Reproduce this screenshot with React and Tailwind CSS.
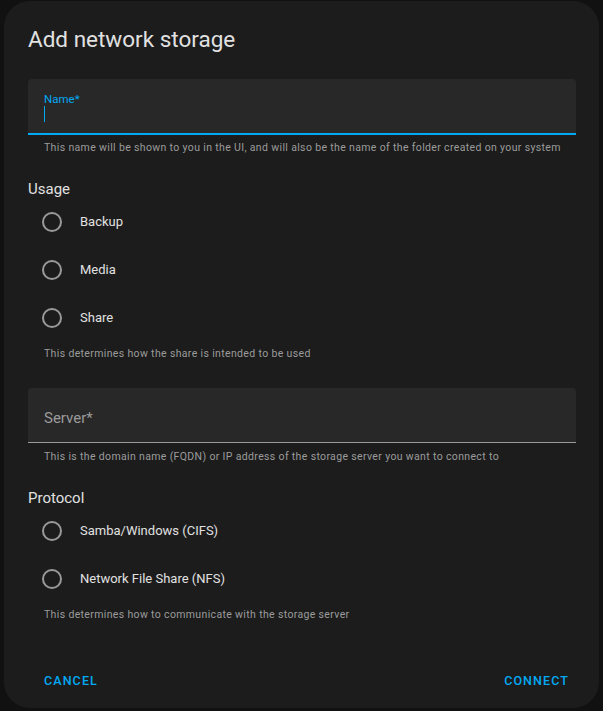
const usageOptions = ['Backup', 'Media', 'Share']
const protocolOptions = ['Samba/Windows (CIFS)', 'Network File Share (NFS)']

function Radio({ label }) {
  return (
    <label className="flex h-12 items-center">
      <span className="flex w-12 items-center justify-center">
        <span className="block h-5 w-5 rounded-full border-2 border-[#9a9a9a]" />
      </span>
      <span className="pl-1 text-[13px] text-[#e1e1e1]">{label}</span>
    </label>
  )
}

function Helper({ children }) {
  return (
    <p className="whitespace-nowrap px-4 text-[10.5px] leading-[16px] tracking-[0.35px] text-[#9b9b9b]">{children}</p>
  )
}

export default function App() {
  return (
    <div className="h-[711px] w-[603px] overflow-hidden bg-[#111111] pl-1 pt-px" style={{ fontFamily: 'Roboto, "Noto Sans", sans-serif' }}>
      <div className="flex h-[707px] w-[595px] flex-col rounded-[26px] bg-[#1c1c1c]">
        <h2 className="px-6 pt-[24px] text-[22.5px] leading-[28px] text-[#e1e1e1]">Add network storage</h2>

        <div className="flex-1 pl-6 pr-[23px] pt-[26px]">
          <div className="relative h-[56px] rounded-t border-b-2 border-[#03a9f4] bg-[#282828]">
            <span className="absolute left-4 top-[12px] text-[11.5px] text-[#03a9f4]">Name*</span>
            <span className="absolute left-4 top-[27px] block h-[16px] w-px bg-[#03a9f4]" />
          </div>
          <div className="pt-[5px]">
            <Helper>This name will be shown to you in the UI, and will also be the name of the folder created on your system</Helper>
          </div>

          <p className="pt-[21px] text-[15px] leading-[24px] text-[#e1e1e1]">Usage</p>
          <div className="-mt-[3px]">
            {usageOptions.map((o) => (
              <Radio key={o} label={o} />
            ))}
          </div>
          <div className="pt-[4px]">
            <Helper>This determines how the share is intended to be used</Helper>
          </div>

          <div className="mt-[26px] flex h-[55px] items-center rounded-t border-b border-[#9b9b9b] bg-[#282828] px-4">
            <span className="pt-[6px] text-[15px] text-[#9b9b9b]">Server*</span>
          </div>
          <div className="pt-[6px]">
            <Helper>This is the domain name (FQDN) or IP address of the storage server you want to connect to</Helper>
          </div>

          <p className="pt-[21px] text-[15px] leading-[24px] text-[#e1e1e1]">Protocol</p>
          <div className="-mt-[3px]">
            {protocolOptions.map((o) => (
              <Radio key={o} label={o} />
            ))}
          </div>
          <div className="pt-[4px]">
            <Helper>This determines how to communicate with the storage server</Helper>
          </div>
        </div>

        <div className="flex items-center justify-between pb-[9px] pl-[40px] pr-[30px]">
          <button type="button" className="px-0 py-2 text-[12.5px] font-medium uppercase tracking-[1.1px] text-[#03a9f4]">
            Cancel
          </button>
          <button type="button" className="px-0 py-2 text-[12.5px] font-medium uppercase tracking-[1.1px] text-[#03a9f4]">
            Connect
          </button>
        </div>
      </div>
    </div>
  )
}
